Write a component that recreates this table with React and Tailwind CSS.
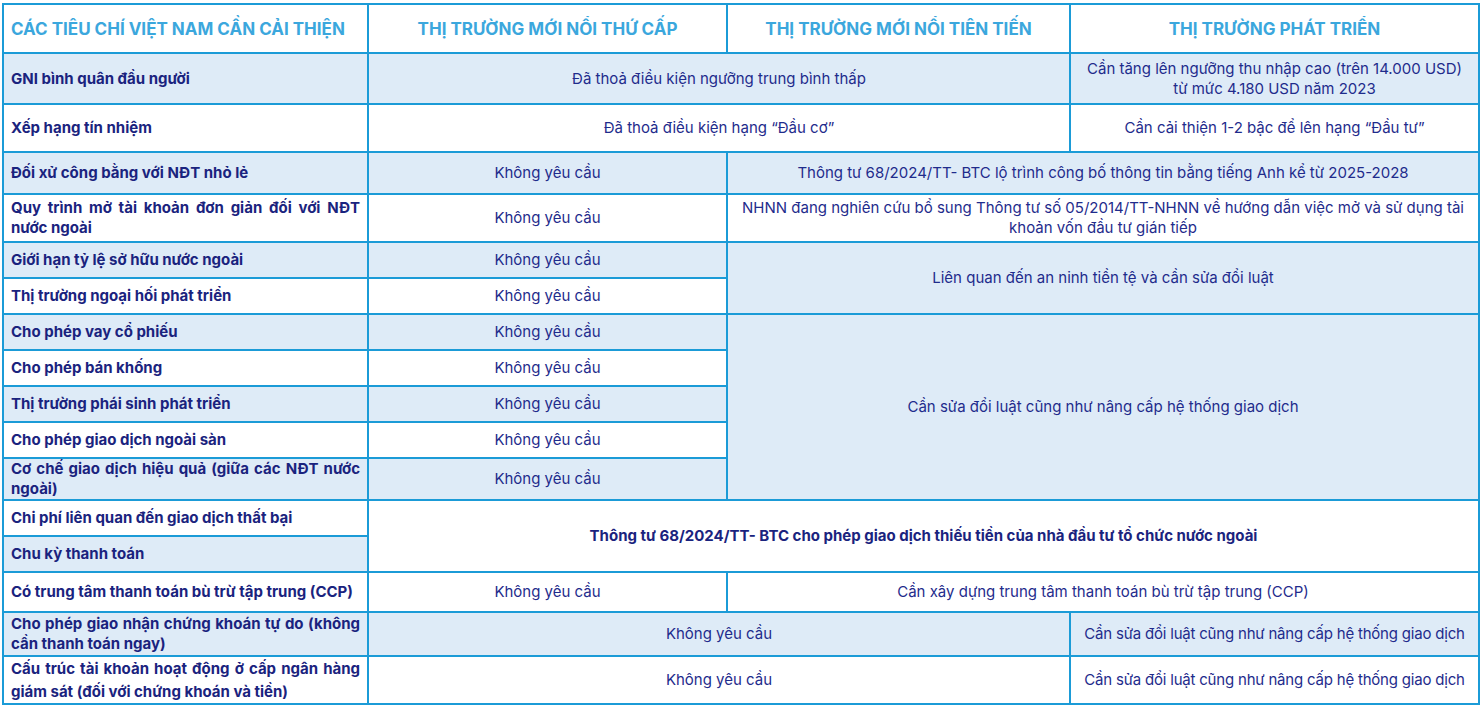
const SH = 'bg-[#deebf7]'

const rows = [
  { label: 'GNI bình quân đầu người', h: 'h-[51px]', shade: true },
  { label: 'Xếp hạng tín nhiệm', h: 'h-[48px]', shade: false },
  { label: 'Đối xử công bằng với NĐT nhỏ lẻ', h: 'h-[42px]', shade: true },
  { label: 'Quy trình mở tài khoản đơn giản đối với NĐT nước ngoài', h: 'h-[48px]', shade: false },
  { label: 'Giới hạn tỷ lệ sở hữu nước ngoài', h: 'h-[36px]', shade: true },
  { label: 'Thị trường ngoại hối phát triển', h: 'h-[36px]', shade: false },
  { label: 'Cho phép vay cổ phiếu', h: 'h-[36px]', shade: true },
  { label: 'Cho phép bán khống', h: 'h-[36px]', shade: false },
  { label: 'Thị trường phái sinh phát triển', h: 'h-[36px]', shade: true },
  { label: 'Cho phép giao dịch ngoài sàn', h: 'h-[36px]', shade: false },
  { label: 'Cơ chế giao dịch hiệu quả (giữa các NĐT nước ngoài)', h: 'h-[42px]', shade: true },
  { label: 'Chi phí liên quan đến giao dịch thất bại', h: 'h-[36px]', shade: false },
  { label: 'Chu kỳ thanh toán', h: 'h-[36px]', shade: true },
  { label: 'Có trung tâm thanh toán bù trừ tập trung (CCP)', h: 'h-[40px]', shade: false },
  { label: 'Cho phép giao nhận chứng khoán tự do (không cần thanh toán ngay)', h: 'h-[44px]', shade: true },
  { label: 'Cấu trúc tài khoản hoạt động ở cấp ngân hàng giám sát (đối với chứng khoán và tiền)', h: 'h-[48px]', shade: false, tall: true },
]

// cells for columns 2-4 per row index
const cells = {
  0: [
    { text: 'Đã thoả điều kiện ngưỡng trung bình thấp', colSpan: 2 },
    { text: 'Cần tăng lên ngưỡng thu nhập cao (trên 14.000 USD) từ mức 4.180 USD năm 2023' },
  ],
  1: [
    { text: 'Đã thoả điều kiện hạng “Đầu cơ”', colSpan: 2 },
    { text: 'Cần cải thiện 1-2 bậc để lên hạng “Đầu tư”' },
  ],
  2: [
    { text: 'Không yêu cầu' },
    { text: 'Thông tư 68/2024/TT- BTC lộ trình công bố thông tin bằng tiếng Anh kể từ 2025-2028', colSpan: 2 },
  ],
  3: [
    { text: 'Không yêu cầu' },
    { text: 'NHNN đang nghiên cứu bổ sung Thông tư số 05/2014/TT-NHNN về hướng dẫn việc mở và sử dụng tài khoản vốn đầu tư gián tiếp', colSpan: 2, pad: 'px-3' },
  ],
  4: [
    { text: 'Không yêu cầu' },
    { text: 'Liên quan đến an ninh tiền tệ và cần sửa đổi luật', colSpan: 2, rowSpan: 2 },
  ],
  5: [{ text: 'Không yêu cầu' }],
  6: [
    { text: 'Không yêu cầu' },
    { text: 'Cần sửa đổi luật cũng như nâng cấp hệ thống giao dịch', colSpan: 2, rowSpan: 5 },
  ],
  7: [{ text: 'Không yêu cầu' }],
  8: [{ text: 'Không yêu cầu' }],
  9: [{ text: 'Không yêu cầu' }],
  10: [{ text: 'Không yêu cầu' }],
  11: [
    { text: 'Thông tư 68/2024/TT- BTC cho phép giao dịch thiếu tiền của nhà đầu tư tổ chức nước ngoài', colSpan: 3, rowSpan: 2, bold: true },
  ],
  12: [],
  13: [
    { text: 'Không yêu cầu' },
    { text: 'Cần xây dựng trung tâm thanh toán bù trừ tập trung (CCP)', colSpan: 2 },
  ],
  14: [
    { text: 'Không yêu cầu', colSpan: 2 },
    { text: 'Cần sửa đổi luật cũng như nâng cấp hệ thống giao dịch', pad: 'px-1 whitespace-nowrap tracking-[-0.2px]' },
  ],
  15: [
    { text: 'Không yêu cầu', colSpan: 2 },
    { text: 'Cần sửa đổi luật cũng như nâng cấp hệ thống giao dịch', pad: 'px-1 whitespace-nowrap tracking-[-0.2px]' },
  ],
}

const bd = 'border-2 border-[#1b9bd7]'

export default function App() {
  return (
    <div className="min-h-[708px] bg-white pl-[2px] pt-[3px]" style={{ fontFamily: 'Inter, "Noto Sans", sans-serif' }}>
      <table className="w-[1476px] table-fixed border-collapse text-[15px] leading-[20px] text-[#1f2c8c]">
        <colgroup>
          <col className="w-[365px]" />
          <col className="w-[359px]" />
          <col className="w-[343px]" />
          <col className="w-[409px]" />
        </colgroup>
        <thead>
          <tr className="h-[49px] bg-white text-[17px] font-bold text-[#3ba7dd]">
            <th className={`${bd} px-[7px] text-left`}>CÁC TIÊU CHÍ VIỆT NAM CẦN CẢI THIỆN</th>
            <th className={`${bd} text-center`}>THỊ TRƯỜNG MỚI NỔI THỨ CẤP</th>
            <th className={`${bd} text-center`}>THỊ TRƯỜNG MỚI NỔI TIÊN TIẾN</th>
            <th className={`${bd} text-center`}>THỊ TRƯỜNG PHÁT TRIỂN</th>
          </tr>
        </thead>
        <tbody>
          {rows.map((r, i) => (
            <tr key={i} className={`${r.h} ${r.shade ? SH : 'bg-white'}`}>
              <td className={`${bd} px-[7px] text-justify font-bold text-[#1a237e] ${r.tall ? 'leading-[23px]' : ''}`}>
                {r.label}
              </td>
              {cells[i].map((c, j) => (
                <td
                  key={j}
                  colSpan={c.colSpan}
                  rowSpan={c.rowSpan}
                  className={`${bd} ${c.pad || 'px-2'} text-center align-middle ${c.bold ? 'font-bold text-[#1a237e]' : ''}`}
                >
                  {c.text}
                </td>
              ))}
            </tr>
          ))}
        </tbody>
      </table>
    </div>
  )
}
